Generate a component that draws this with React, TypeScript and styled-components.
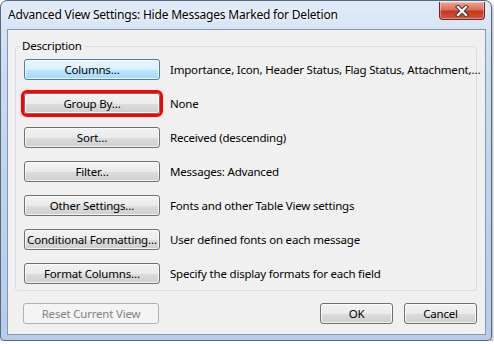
import React from 'react';
import styled, { createGlobalStyle } from 'styled-components';

const GlobalStyle = createGlobalStyle`
  html, body {
    margin: 0;
    padding: 0;
    background: #ffffff;
  }
  body {
    font-family: 'Noto Sans', 'Open Sans', sans-serif;
    font-size: 11.5px;
    letter-spacing: -0.2px;
    color: #000;
  }
`;

const Window = styled.div`
  box-sizing: border-box;
  width: 492px;
  height: 341px;
  display: flex;
  flex-direction: column;
  border: 1px solid #5b6878;
  border-radius: 7px 7px 4px 4px;
  background: linear-gradient(180deg, #dfebf8 0%, #c9dcf1 20%, #bcd3ed 60%, #b5cdea 100%);
  box-shadow: 1px 2px 3px rgba(0, 0, 0, 0.35);
`;

const TitleBar = styled.div`
  height: 28px;
  display: flex;
  align-items: flex-start;
  justify-content: space-between;
  padding-left: 7px;
`;

const Title = styled.div`
  padding-top: 6px;
  line-height: 16px;
  font-size: 12px;
  color: #000;
  text-shadow: 0 0 6px #ffffff, 0 0 3px #ffffff;
`;

const CloseButton = styled.div`
  box-sizing: border-box;
  width: 46px;
  height: 18px;
  margin: 1px 6px 0 0;
  display: flex;
  align-items: center;
  justify-content: center;
  border: 1px solid #6b2a22;
  border-top: none;
  border-radius: 0 0 4px 4px;
  background: linear-gradient(180deg, #eba595 0%, #da6e5a 45%, #c4381d 55%, #d4553a 100%);
  box-shadow: inset 0 0 0 1px rgba(255, 255, 255, 0.35);
`;

const Client = styled.div`
  flex: 1;
  display: flex;
  flex-direction: column;
  margin: 0 5px 5px 6px;
  background: #f0f0f0;
  border: 1px solid #8397ad;
  padding: 0 8px 8px 7px;
`;

const GroupBox = styled.fieldset`
  min-width: 0;
  margin: 8px 0 0 0;
  padding: 5px 0 6px 8px;
  border: 1px solid #d5dfe5;
  border-radius: 3px;
  display: flex;
  flex-direction: column;
  gap: 13px;
`;

const Legend = styled.legend`
  padding: 0 2px;
  margin-left: -4px;
  line-height: 16px;
`;

const Row = styled.div`
  display: flex;
  align-items: center;
  gap: 10px;
`;

const Button = styled.button<{ $variant?: 'normal' | 'focused' | 'disabled'; $width?: number; $marked?: boolean }>`
  box-sizing: border-box;
  flex-shrink: 0;
  width: ${(p) => p.$width ?? 136}px;
  height: 21px;
  padding: 0;
  font-family: inherit;
  font-size: inherit;
  letter-spacing: inherit;
  line-height: 16px;
  white-space: nowrap;
  border-radius: 3px;
  cursor: default;
  border: 1px solid ${(p) => (p.$variant === 'focused' ? '#3c7fb1' : p.$variant === 'disabled' ? '#adb2b5' : '#707070')};
  color: ${(p) => (p.$variant === 'disabled' ? '#838383' : '#000')};
  background: ${(p) =>
    p.$variant === 'focused'
      ? 'linear-gradient(180deg, #eaf6fd 0%, #d9f0fc 50%, #bee6fd 51%, #a7d9f5 100%)'
      : p.$variant === 'disabled'
      ? '#f4f4f4'
      : 'linear-gradient(180deg, #f2f2f2 0%, #ebebeb 50%, #dddddd 51%, #cfcfcf 100%)'};
  box-shadow: inset 0 0 0 1px ${(p) => (p.$variant === 'disabled' ? '#f4f4f4' : 'rgba(255, 255, 255, 0.75)')};
  outline: ${(p) => (p.$marked ? '3px solid #ff0000' : 'none')};
  outline-offset: 0;
`;

const Info = styled.span`
  white-space: nowrap;
`;

const Footer = styled.div`
  display: flex;
  align-items: center;
  margin-top: 12px;
  padding-left: 8px;
  gap: 11px;
`;

const Spacer = styled.div`
  flex: 1;
`;

const rows = [
  { label: 'Columns...', info: 'Importance, Icon, Header Status, Flag Status, Attachment,...', variant: 'focused' as const },
  { label: 'Group By...', info: 'None', marked: true },
  { label: 'Sort...', info: 'Received (descending)' },
  { label: 'Filter...', info: 'Messages: Advanced' },
  { label: 'Other Settings...', info: 'Fonts and other Table View settings' },
  { label: 'Conditional Formatting...', info: 'User defined fonts on each message' },
  { label: 'Format Columns...', info: 'Specify the display formats for each field' },
];

function CloseIcon() {
  return (
    <svg width="14" height="12" viewBox="0 0 14 12">
      <path d="M3 2 L11 10 M11 2 L3 10" stroke="#3a3a3a" strokeWidth="4.2" strokeLinecap="square" />
      <path d="M3 2 L11 10 M11 2 L3 10" stroke="#ffffff" strokeWidth="2.2" strokeLinecap="square" />
    </svg>
  );
}

function App() {
  return (
    <>
      <GlobalStyle />
      <Window>
        <TitleBar>
          <Title>Advanced View Settings: Hide Messages Marked for Deletion</Title>
          <CloseButton>
            <CloseIcon />
          </CloseButton>
        </TitleBar>
        <Client>
          <GroupBox>
            <Legend>Description</Legend>
            {rows.map((r) => (
              <Row key={r.label}>
                <Button $variant={r.variant ?? 'normal'} $marked={r.marked}>
                  {r.label.replace('...', '\u2026')}
                </Button>
                <Info>{r.info.replace(',...', ',\u2026')}</Info>
              </Row>
            ))}
          </GroupBox>
          <Footer>
            <Button $variant="disabled" disabled>
              Reset Current View
            </Button>
            <Spacer />
            <Button $width={73}>OK</Button>
            <Button $width={73}>Cancel</Button>
          </Footer>
        </Client>
      </Window>
    </>
  );
}

export default App;
